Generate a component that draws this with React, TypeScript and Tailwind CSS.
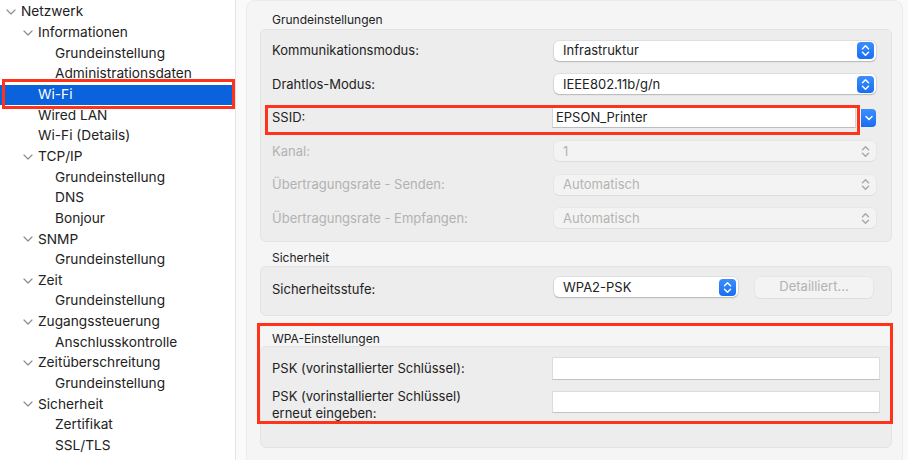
import React from "react";

type Item = { label: string; level: 0 | 1 | 2; chevron?: boolean; selected?: boolean };

const items: Item[] = [
  { label: "Netzwerk", level: 0, chevron: true },
  { label: "Informationen", level: 1, chevron: true },
  { label: "Grundeinstellung", level: 2 },
  { label: "Administrationsdaten", level: 2 },
  { label: "Wi-Fi", level: 1, selected: true },
  { label: "Wired LAN", level: 1 },
  { label: "Wi-Fi (Details)", level: 1 },
  { label: "TCP/IP", level: 1, chevron: true },
  { label: "Grundeinstellung", level: 2 },
  { label: "DNS", level: 2 },
  { label: "Bonjour", level: 2 },
  { label: "SNMP", level: 1, chevron: true },
  { label: "Grundeinstellung", level: 2 },
  { label: "Zeit", level: 1, chevron: true },
  { label: "Grundeinstellung", level: 2 },
  { label: "Zugangssteuerung", level: 1, chevron: true },
  { label: "Anschlusskontrolle", level: 2 },
  { label: "Zeitüberschreitung", level: 1, chevron: true },
  { label: "Grundeinstellung", level: 2 },
  { label: "Sicherheit", level: 1, chevron: true },
  { label: "Zertifikat", level: 2 },
  { label: "SSL/TLS", level: 2 },
];

const padByLevel = ["pl-[4px]", "pl-[21px]", "pl-[38px]"];

function Chevron() {
  return (
    <svg width="10" height="6" viewBox="0 0 10 6" className="ml-[2px]">
      <path d="M1 1 L5 5 L9 1" fill="none" stroke="#8f8f8f" strokeWidth="1.2" strokeLinecap="round" strokeLinejoin="round" />
    </svg>
  );
}

function UpDown({ color }: { color: string }) {
  return (
    <svg width="9" height="13" viewBox="0 0 9 13">
      <path d="M1.5 4.8 L4.5 1.8 L7.5 4.8" fill="none" stroke={color} strokeWidth="1.5" strokeLinecap="round" strokeLinejoin="round" />
      <path d="M1.5 8.2 L4.5 11.2 L7.5 8.2" fill="none" stroke={color} strokeWidth="1.5" strokeLinecap="round" strokeLinejoin="round" />
    </svg>
  );
}

function Sidebar() {
  return (
    <div className="w-[236px] shrink-0 bg-white border-r border-[#e4e4e4] pt-[2px] h-[460px] overflow-hidden">
      {items.map((it, i) => (
        <div
          key={i}
          className={`relative h-[20.65px] flex items-center ${padByLevel[it.level]} ${
            it.selected ? "bg-[#0a63dc] text-white" : "text-[#222]"
          }`}
        >
          <span className="w-[17px] shrink-0 flex items-center">{it.chevron ? <Chevron /> : null}</span>
          <span className="text-[13.7px] leading-none whitespace-nowrap">{it.label}</span>
          {it.selected ? (
            <div className="absolute left-[2px] top-[-6px] w-[233px] h-[30px] border-[3px] border-[#ff3319]" />
          ) : null}
        </div>
      ))}
    </div>
  );
}

function Select({ value, width, disabled }: { value: string; width: string; disabled?: boolean }) {
  return (
    <div
      className={`${width} h-[20px] ml-[2px] rounded-[5px] flex items-center justify-between pl-[9px] pr-[2px] ${
        disabled
          ? "bg-[#f3f3f3] shadow-[0_0_0_0.5px_rgba(0,0,0,0.05),0_1px_1px_rgba(0,0,0,0.04)] text-[#b4b4b4]"
          : "bg-white shadow-[0_0_0_0.5px_rgba(0,0,0,0.12),0_1px_1.5px_rgba(0,0,0,0.18)] text-[#222]"
      }`}
    >
      <span className="text-[13px] leading-none">{value}</span>
      {disabled ? (
        <span className="w-[17px] h-[17px] flex items-center justify-center">
          <UpDown color="#a9a9a9" />
        </span>
      ) : (
        <span className="w-[17px] h-[17px] rounded-[4px] bg-linear-to-b from-[#3c8efc] to-[#166ef3] flex items-center justify-center">
          <UpDown color="#ffffff" />
        </span>
      )}
    </div>
  );
}

function Row({ label, disabled, children }: { label: string; disabled?: boolean; children?: React.ReactNode }) {
  return (
    <div className="relative h-[33.5px] flex items-center">
      <div className={`w-[280px] shrink-0 text-[13px] ${disabled ? "text-[#b2b2b2]" : "text-[#222]"}`}>{label}</div>
      {children}
    </div>
  );
}

function Box({ className, children }: { className?: string; children: React.ReactNode }) {
  return (
    <div className={`rounded-[6px] bg-[#ededed] border border-[#e3e3e3] pl-[11px] ${className ?? ""}`}>{children}</div>
  );
}

function Title({ children, className }: { children: React.ReactNode; className?: string }) {
  return <div className={`pl-[12px] h-[14px] leading-[14px] text-[12px] text-[#222] ${className ?? ""}`}>{children}</div>;
}

export default function App() {
  return (
    <div
      className="w-[908px] h-[460px] flex overflow-hidden bg-white"
      style={{ fontFamily: "Inter, 'Liberation Sans', sans-serif" }}
    >
      <Sidebar />
      <div className="flex-1 bg-[#fafafa] pl-[10px] pr-[5px]">
        <div className="h-[470px] rounded-[9px] bg-[#f5f5f5] border border-[#ebebeb] pl-[13px] pr-[10px] pt-[12px]">
          <Title className="mb-[2px]">Grundeinstellungen</Title>
          <Box className="pt-[4px] pb-[6px]">
            <Row label="Kommunikationsmodus:">
              <Select value="Infrastruktur" width="w-[322px]" />
            </Row>
            <Row label="Drahtlos-Modus:">
              <Select value="IEEE802.11b/g/n" width="w-[322px]" />
            </Row>
            <Row label="SSID:">
              <div className="flex items-center">
                <div className="w-[304px] h-[21px] bg-white border border-[#d6d6d6] border-b-[#bdbdbd] flex items-center pl-[3px] text-[13px] text-[#222]">
                  EPSON_Printer
                </div>
                <span className="ml-[5px] w-[15px] h-[18px] rounded-r-[4px] bg-linear-to-b from-[#3c8efc] to-[#166ef3] flex items-center justify-center">
                  <svg width="8" height="6" viewBox="0 0 8 6">
                    <path d="M1 1.5 L4 4.5 L7 1.5" fill="none" stroke="#fff" strokeWidth="1.5" strokeLinecap="round" strokeLinejoin="round" />
                  </svg>
                </span>
              </div>
              <div className="absolute left-[-7px] top-[4px] w-[595px] h-[30px] border-[3px] border-[#ff3319]" />
            </Row>
            <Row label="Kanal:" disabled>
              <Select value="1" width="w-[322px]" disabled />
            </Row>
            <Row label="Übertragungsrate - Senden:" disabled>
              <Select value="Automatisch" width="w-[322px]" disabled />
            </Row>
            <Row label="Übertragungsrate - Empfangen:" disabled>
              <Select value="Automatisch" width="w-[322px]" disabled />
            </Row>
          </Box>

          <Title className="mt-[9px] mb-[1px]">Sicherheit</Title>
          <Box className="h-[50px] flex items-center pb-[8px]">
            <div className="w-[280px] shrink-0 text-[13px] text-[#222] mt-[6px]">Sicherheitsstufe:</div>
            <Select value="WPA2-PSK" width="w-[184px]" />
            <div className="ml-[17px] w-[118px] h-[21px] rounded-[5px] bg-[#f3f3f3] shadow-[0_0_0_0.5px_rgba(0,0,0,0.05),0_1px_1px_rgba(0,0,0,0.04)] flex items-center justify-center text-[13px] text-[#b2b2b2]">
              Detailliert...
            </div>
          </Box>

          <div className="relative mt-[16px]">
            <Title>WPA-Einstellungen</Title>
            <Box className="pt-[10px] pb-[25px]">
              <div className="flex items-center h-[23px]">
                <div className="w-[280px] shrink-0 text-[13px] text-[#222]">PSK (vorinstallierter Schlüssel):</div>
                <div className="w-[328px] h-[23px] bg-white border border-[#dcdcdc] border-b-[#c2c2c2]" />
              </div>
              <div className="flex items-start mt-[8px]">
                <div className="w-[280px] shrink-0 text-[13px] leading-[17px] text-[#222]">
                  PSK (vorinstallierter Schlüssel)
                  <br />
                  erneut eingeben:
                </div>
                <div className="mt-[3px] w-[328px] h-[22px] bg-white border border-[#dcdcdc] border-b-[#c2c2c2]" />
              </div>
            </Box>
            <div className="absolute left-[-3px] top-[-9px] w-[636px] h-[101px] border-[3px] border-[#ff3319]" />
          </div>
        </div>
      </div>
    </div>
  );
}
